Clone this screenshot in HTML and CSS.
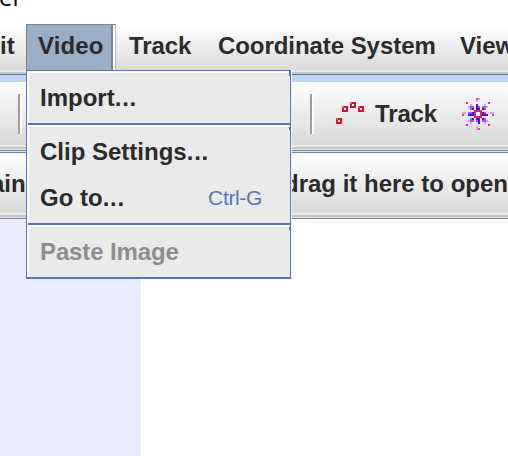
FILE: index.html
```
<!DOCTYPE html>
<html lang="en">
<head>
<meta charset="utf-8">
<title>Tracker</title>
<link rel="stylesheet" href="styles.css">
</head>
<body>
<div class="title"><span class="title-text">er</span></div>
<nav class="menubar">
  <span class="item edit">it</span>
  <span class="item active">Video</span>
  <span class="item track">Track</span>
  <span class="item coords">Coordinate System</span>
  <span class="item view">View</span>
</nav>
<div class="edge edge-blue"></div>
<div class="toolbar">
  <i class="divider first"></i>
  <i class="divider second"></i>
  <svg class="track-icon" width="28" height="22" viewBox="0 0 14 11" shape-rendering="crispEdges">
    <defs><g id="pt"><path fill="#ec0530" d="M0 0h3v3h-3z"/><path fill="#f0506c" d="M0 0h1v1h-1z"/><path fill="#fff" d="M1 1h1v1h-1z"/></g></defs>
    <use href="#pt" x="0" y="8"/><use href="#pt" x="3" y="2"/><use href="#pt" x="7" y="0"/><use href="#pt" x="11" y="2"/>
  </svg>
  <span class="tool-label">Track</span>
  <svg class="star-icon" width="32" height="32" viewBox="0 0 16 16" shape-rendering="crispEdges">
    <path fill="#ff10c0" d="M2 2h1v1h-1zM13 2h1v1h-1zM2 13h1v1h-1zM13 13h1v1h-1z"/>
    <path fill="#c050b8" d="M7 0h1v1h-1zM0 8h1v1h-1zM15 8h1v1h-1zM8 15h1v1h-1z"/>
    <path fill="#e49aec" d="M8 0h1v1h-1zM7 1h1v1h-1zM1 7h1v1h-1zM0 7h1v1h-1zM15 7h1v1h-1zM14 7h1v1h-1zM7 15h1v1h-1zM7 14h1v1h-1zM3 4h1v1h-1zM11 3h1v1h-1zM12 4h1v1h-1zM3 11h1v1h-1zM4 12h1v1h-1zM11 12h1v1h-1zM12 11h1v1h-1zM4 3h1v1h-1z"/>
    <path fill="#b050e8" d="M4 4h1v1h-1zM5 4h1v1h-1zM4 5h1v1h-1zM10 4h2v1h-2zM11 5h1v1h-1zM4 10h1v2h-1zM5 11h1v1h-1zM10 11h2v1h-2zM11 10h1v1h-1zM8 4h1v1h-1zM3 7h2v1h-2zM11 7h1v1h-1zM7 11h1v1h-1z"/>
    <path fill="#3a18f0" d="M7 3h1v3h-1zM8 5h1v1h-1zM3 8h3v1h-3zM5 7h1v1h-1zM10 8h3v1h-3zM10 7h1v1h-1zM8 10h1v3h-1zM7 10h1v1h-1zM5 5h1v1h-1zM10 5h1v1h-1zM5 10h1v1h-1zM10 10h1v1h-1z"/>
    <path fill="#ff1850" d="M6 6h4v4h-4z"/><path fill="#fff" d="M7 7h2v2h-2z"/>
  </svg>
</div>
<div class="edge edge-gray"></div>
<div class="hint"><span class="hint-left">ain</span><span class="hint-right">drag it here to open</span></div>
<div class="edge edge-last"></div>
<main class="workspace"><div class="pane"></div></main>
<div class="menu">
  <div class="entry one"><span>Import<span class="dots">...</span></span></div>
  <div class="sep"></div>
  <div class="entry two"><span>Clip Settings<span class="dots">...</span></span></div>
  <div class="entry three"><span>Go to<span class="dots">...</span></span><span class="key">Ctrl-G</span></div>
  <div class="sep"></div>
  <div class="entry four">Paste Image</div>
</div>
</body>
</html>
```
FILE: styles.css
```
* { box-sizing: border-box; }
body {
  margin: 0; width: 508px; height: 456px; overflow: hidden; position: relative;
  background: #fff; color: #2b2b2b;
  font: bold 24px/28px "Liberation Sans", Arial, sans-serif; white-space: nowrap;
}
.title { height: 24px; overflow: hidden; }
.title-text { display: block; margin: -17px 0 0 -1px; color: #000; font: 24px/28px "Open Sans", sans-serif; }
.menubar { height: 46px; display: flex; background: linear-gradient(#fff, #dadada); overflow: hidden; }
.item { flex: none; padding-top: 8px; height: 46px; }
.edit { width: 26px; }
.active { width: 90px; padding-left: 11px; padding-top: 7px; letter-spacing: 0.15px; background: #99afc3; border: 1px solid #71869a; border-bottom: 0; border-right: 1px solid #b4bac0; box-shadow: inset -2px 0 #fff, inset -4px 0 #71869a; }
.track { width: 102px; padding-left: 13px; letter-spacing: -0.1px; }
.coords { width: 242px; letter-spacing: -0.06px; }
.edge-blue { height: 12px; background: linear-gradient(#e9e9e9 2px, #c4c4c4 2px 4px, #5577ba 4px 5px, #c0d7ef 5px); }
.toolbar { height: 63px; display: flex; align-items: flex-start; background: linear-gradient(#fff, #d9d9d9); }
.divider { flex: none; width: 4px; height: 40px; margin-top: 12px; background: linear-gradient(90deg, #a29c8e 2px, #fff 2px); }
.first { margin-left: 18px; }
.second { margin-left: 288px; }
.track-icon { flex: none; margin: 20px 0 0 22px; }
.tool-label { flex: none; width: 98px; margin-top: 18px; padding-left: 11px; letter-spacing: -0.15px; }
.star-icon { flex: none; margin-top: 16px; }
.edge-gray { height: 8px; background: linear-gradient(#e9e9e9 2px, #c4c4c4 2px 4px, #e0e6ea 4px 5px, #71869a 5px 6px, #dce4ea 6px 7px, #71869a 7px); }
.hint { height: 60px; display: flex; padding-top: 17px; background: linear-gradient(#fff, #d9d9d9); }
.hint-left { width: 290px; margin-left: -9px; }
.hint-right { flex: none; margin-left: 7px; }
.edge-last { height: 6px; background: linear-gradient(#e9e9e9 2px, #c4c4c4 2px 4px, #e0e6ea 4px 5px, #71869a 5px); }
.workspace { height: 237px; }
.pane { width: 141px; height: 100%; background: #ebecff; }
.menu { position: absolute; left: 26px; top: 70px; width: 265px; height: 209px; border: 1px solid #5577ba; border-bottom-width: 2px; background: #eaeaea; box-shadow: inset 2px 2px #fff, 1px 0 #f4f4f4; }
.entry { height: 46px; padding: 9px 0 0 13px; background: linear-gradient(#5577ba, #5577ba) right top / 1px 3px no-repeat; }
.dots { letter-spacing: 0.8px; }
.one { height: 52px; padding-top: 13px; background-size: 1px 5px; }
.two { height: 48px; padding-top: 11px; }
.three { height: 48px; display: flex; justify-content: space-between; padding-right: 28px; background: none; }
.key { font-weight: normal; font-size: 21px; letter-spacing: -0.35px; color: #5577ba; }
.four { color: #8e8e8e; padding-top: 11px; letter-spacing: -0.13px; }
.sep { height: 4px; margin-left: 1px; background: linear-gradient(#5577ba 2px, #fff 2px); }
```
